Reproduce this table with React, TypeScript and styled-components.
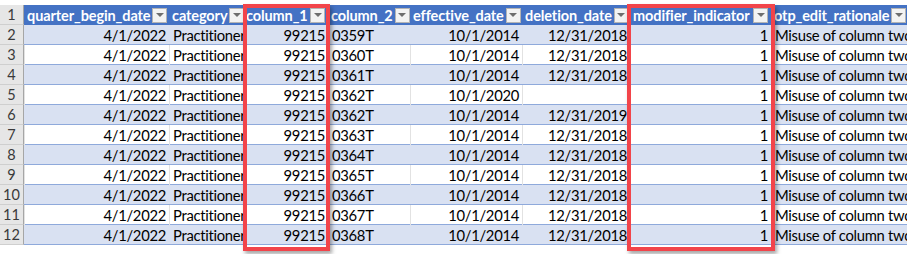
import { FC } from "react";
import { styled, createGlobalStyle } from "styled-components";

const GlobalStyle = createGlobalStyle`
  body {
    margin: 0;
    background: #ffffff;
    font-family: Lato, "Liberation Sans", sans-serif;
  }
`;

const cols = "24px 145px 74px 85px 82px 112px 108px 141px 1fr";

const Page = styled.div`
  position: relative;
  width: 907px;
  height: 254px;
  padding-top: 5px;
  box-sizing: border-box;
  overflow: hidden;
`;

const Sheet = styled.div`
  display: flex;
  flex-direction: column;
`;

const Row = styled.div<{ $band: boolean }>`
  display: grid;
  grid-template-columns: ${cols};
  height: 20px;
  background: ${(p) => (p.$band ? "#d9e1f2" : "#ffffff")};
  box-shadow: inset 0 -1px 0 #8ea9db;
`;

const HeaderRow = styled.div`
  display: grid;
  grid-template-columns: ${cols};
  height: 20px;
  background: #4472c4;
`;

const RowNum = styled.div`
  display: flex;
  align-items: center;
  justify-content: center;
  background: #e6e6e6;
  border-right: 1px solid #a6a6a6;
  border-bottom: 1px solid #cfcfcf;
  box-sizing: border-box;
  color: #3a3a3a;
  font-size: 14.5px;
`;

const HeadCell = styled.div`
  display: flex;
  align-items: center;
  justify-content: space-between;
  padding: 0 3px 0 3px;
  overflow: hidden;
  white-space: nowrap;
  color: #ffffff;
  font-weight: 700;
  font-size: 14.5px;
  letter-spacing: -0.1px;
`;

const DropBtn = styled.span`
  flex: none;
  display: flex;
  align-items: center;
  justify-content: center;
  width: 15px;
  height: 15px;
  margin-left: 2px;
  background: #f3f3f3;
  border: 1px solid #b4b4b4;
  box-sizing: border-box;

  &::after {
    content: "";
    border-left: 4px solid transparent;
    border-right: 4px solid transparent;
    border-top: 4px solid #6e6e6e;
  }
`;

const Cell = styled.div<{ $align: "left" | "right"; $band: boolean }>`
  display: flex;
  align-items: center;
  justify-content: ${(p) => (p.$align === "right" ? "flex-end" : "flex-start")};
  padding: 0 3px 1px 3px;
  overflow: hidden;
  white-space: nowrap;
  color: #000000;
  font-size: 14.8px;
  letter-spacing: -0.3px;
  border-left: 1px solid ${(p) => (p.$band ? "transparent" : "#e2e2e2")};
`;

const Highlight = styled.div<{ $left: number; $width: number }>`
  position: absolute;
  top: 4px;
  left: ${(p) => p.$left}px;
  width: ${(p) => p.$width}px;
  height: 247px;
  border: 4px solid #f2444a;
  box-sizing: border-box;
  box-shadow: 2px 3px 4px rgba(0, 0, 0, 0.35);
  pointer-events: none;
`;

const headers = [
  "quarter_begin_date",
  "category",
  "column_1",
  "column_2",
  "effective_date",
  "deletion_date",
  "modifier_indicator",
  "otp_edit_rationale",
];

const aligns: ("left" | "right")[] = [
  "right",
  "left",
  "right",
  "left",
  "right",
  "right",
  "right",
  "left",
];

type Rec = { code: string; eff: string; del: string };

const records: Rec[] = [
  { code: "0359T", eff: "10/1/2014", del: "12/31/2018" },
  { code: "0360T", eff: "10/1/2014", del: "12/31/2018" },
  { code: "0361T", eff: "10/1/2014", del: "12/31/2018" },
  { code: "0362T", eff: "10/1/2020", del: "" },
  { code: "0362T", eff: "10/1/2014", del: "12/31/2019" },
  { code: "0363T", eff: "10/1/2014", del: "12/31/2018" },
  { code: "0364T", eff: "10/1/2014", del: "12/31/2018" },
  { code: "0365T", eff: "10/1/2014", del: "12/31/2018" },
  { code: "0366T", eff: "10/1/2014", del: "12/31/2018" },
  { code: "0367T", eff: "10/1/2014", del: "12/31/2018" },
  { code: "0368T", eff: "10/1/2014", del: "12/31/2018" },
];

const App: FC = () => {
  return (
    <Page>
      <GlobalStyle />
      <Sheet>
        <HeaderRow>
          <RowNum>1</RowNum>
          {headers.map((h) => (
            <HeadCell key={h}>
              {h}
              <DropBtn />
            </HeadCell>
          ))}
        </HeaderRow>
        {records.map((r, i) => {
          const band = i % 2 === 0;
          const values = [
            "4/1/2022",
            "Practitioner",
            "99215",
            r.code,
            r.eff,
            r.del,
            "1",
            "Misuse of column two codes",
          ];
          return (
            <Row key={i} $band={band}>
              <RowNum>{i + 2}</RowNum>
              {values.map((v, j) => (
                <Cell key={j} $align={aligns[j]} $band={band}>
                  {v}
                </Cell>
              ))}
            </Row>
          );
        })}
      </Sheet>
      <Highlight $left={243} $width={87} />
      <Highlight $left={627} $width={148} />
    </Page>
  );
};

export default App;
